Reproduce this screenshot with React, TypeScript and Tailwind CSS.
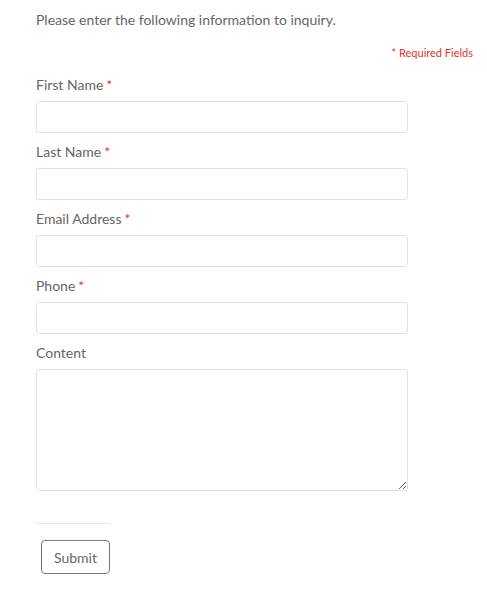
const fields = [
  { label: "First Name", required: true },
  { label: "Last Name", required: true },
  { label: "Email Address", required: true },
  { label: "Phone", required: true },
];

export default function App() {
  return (
    <div
      className="min-h-[604px] bg-white pl-9 pr-[14px] pt-[10px] text-[#666]"
      style={{ fontFamily: "Lato, 'Liberation Sans', sans-serif" }}
    >
      <p className="text-[14px] leading-[20px]">
        Please enter the following information to inquiry.
      </p>
      <p className="mt-[16px] text-right text-[11px] leading-[14px] text-[#e0352b]">
        * Required Fields
      </p>
      <form className="mt-[17px] flex w-[372px] flex-col">
        {fields.map((f) => (
          <div key={f.label} className="mb-[11px] flex flex-col">
            <label className="mb-[8px] text-[14px] leading-[16px]">
              {f.label}
              {f.required && (
                <span className="ml-[3px] text-[#e0352b]">*</span>
              )}
            </label>
            <input
              type="text"
              className="h-[32px] w-full rounded-[3px] border border-[#e2e2e2] bg-white px-2 outline-none"
            />
          </div>
        ))}
        <div className="flex flex-col">
          <label className="mb-[8px] text-[14px] leading-[16px]">Content</label>
          <textarea className="h-[122px] w-full resize-y rounded-[3px] border border-[#e2e2e2] bg-white px-2 outline-none" />
        </div>
        <hr className="mt-[32px] w-[74px] border-t border-[#e4e4e4]" />
        <div className="mt-[16px] pl-[5px]">
          <button
            type="button"
            className="h-[34px] w-[69px] rounded-[4px] border border-[#777] bg-white text-[14px] text-[#666]"
          >
            Submit
          </button>
        </div>
      </form>
    </div>
  );
}
